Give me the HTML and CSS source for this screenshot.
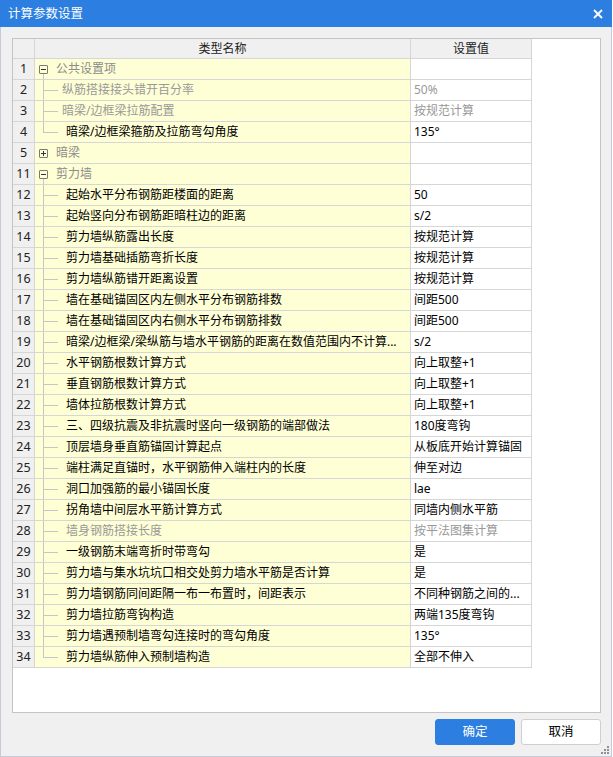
FILE: index.html
```html
<!DOCTYPE html>
<html lang="zh-CN">
<head>
<meta charset="utf-8">
<title>计算参数设置</title>
<link rel="stylesheet" href="styles.css">
</head>
<body>
<div class="dialog">
  <div class="titlebar">
    <span class="title">计算参数设置</span>
    <svg class="close" width="10" height="10" viewBox="0 0 10 10"><path d="M1 1L9 9M9 1L1 9" stroke="#fff" stroke-width="1.8" fill="none"/></svg>
  </div>
  <div class="content">
    <div class="grid">
      <div class="row head">
        <div class="num"></div>
        <div class="name hcell">类型名称</div>
        <div class="val hcell">设置值</div>
      </div>

      <div class="row"><div class="num">1</div><div class="name open"><span class="tog minus"></span><span class="gtxt">公共设置项</span></div><div class="val"></div></div>
      <div class="row"><div class="num">2</div><div class="name"><span class="conn"></span><span class="txt dis near">纵筋搭接接头错开百分率</span></div><div class="val dis">50%</div></div>
      <div class="row"><div class="num">3</div><div class="name"><span class="conn"></span><span class="txt dis near">暗梁/边框梁拉筋配置</span></div><div class="val dis">按规范计算</div></div>
      <div class="row"><div class="num">4</div><div class="name"><span class="conn last"></span><span class="txt">暗梁/边框梁箍筋及拉筋弯勾角度</span></div><div class="val">135°</div></div>
      <div class="row"><div class="num">5</div><div class="name"><span class="tog plus"></span><span class="gtxt">暗梁</span></div><div class="val"></div></div>
      <div class="row"><div class="num">11</div><div class="name open"><span class="tog minus"></span><span class="gtxt">剪力墙</span></div><div class="val"></div></div>
      <div class="row"><div class="num">12</div><div class="name"><span class="conn"></span><span class="txt">起始水平分布钢筋距楼面的距离</span></div><div class="val">50</div></div>
      <div class="row"><div class="num">13</div><div class="name"><span class="conn"></span><span class="txt">起始竖向分布钢筋距暗柱边的距离</span></div><div class="val">s/2</div></div>
      <div class="row"><div class="num">14</div><div class="name"><span class="conn"></span><span class="txt">剪力墙纵筋露出长度</span></div><div class="val">按规范计算</div></div>
      <div class="row"><div class="num">15</div><div class="name"><span class="conn"></span><span class="txt">剪力墙基础插筋弯折长度</span></div><div class="val">按规范计算</div></div>
      <div class="row"><div class="num">16</div><div class="name"><span class="conn"></span><span class="txt">剪力墙纵筋错开距离设置</span></div><div class="val">按规范计算</div></div>
      <div class="row"><div class="num">17</div><div class="name"><span class="conn"></span><span class="txt">墙在基础锚固区内左侧水平分布钢筋排数</span></div><div class="val">间距500</div></div>
      <div class="row"><div class="num">18</div><div class="name"><span class="conn"></span><span class="txt">墙在基础锚固区内右侧水平分布钢筋排数</span></div><div class="val">间距500</div></div>
      <div class="row"><div class="num">19</div><div class="name"><span class="conn"></span><span class="txt">暗梁/边框梁/梁纵筋与墙水平钢筋的距离在数值范围内不计算...</span></div><div class="val">s/2</div></div>
      <div class="row"><div class="num">20</div><div class="name"><span class="conn"></span><span class="txt">水平钢筋根数计算方式</span></div><div class="val">向上取整+1</div></div>
      <div class="row"><div class="num">21</div><div class="name"><span class="conn"></span><span class="txt">垂直钢筋根数计算方式</span></div><div class="val">向上取整+1</div></div>
      <div class="row"><div class="num">22</div><div class="name"><span class="conn"></span><span class="txt">墙体拉筋根数计算方式</span></div><div class="val">向上取整+1</div></div>
      <div class="row"><div class="num">23</div><div class="name"><span class="conn"></span><span class="txt">三、四级抗震及非抗震时竖向一级钢筋的端部做法</span></div><div class="val">180度弯钩</div></div>
      <div class="row"><div class="num">24</div><div class="name"><span class="conn"></span><span class="txt">顶层墙身垂直筋锚固计算起点</span></div><div class="val">从板底开始计算锚固</div></div>
      <div class="row"><div class="num">25</div><div class="name"><span class="conn"></span><span class="txt">端柱满足直锚时，水平钢筋伸入端柱内的长度</span></div><div class="val">伸至对边</div></div>
      <div class="row"><div class="num">26</div><div class="name"><span class="conn"></span><span class="txt">洞口加强筋的最小锚固长度</span></div><div class="val">lae</div></div>
      <div class="row"><div class="num">27</div><div class="name"><span class="conn"></span><span class="txt">拐角墙中间层水平筋计算方式</span></div><div class="val">同墙内侧水平筋</div></div>
      <div class="row"><div class="num">28</div><div class="name"><span class="conn"></span><span class="txt dis">墙身钢筋搭接长度</span></div><div class="val dis">按平法图集计算</div></div>
      <div class="row"><div class="num">29</div><div class="name"><span class="conn"></span><span class="txt">一级钢筋末端弯折时带弯勾</span></div><div class="val">是</div></div>
      <div class="row"><div class="num">30</div><div class="name"><span class="conn"></span><span class="txt">剪力墙与集水坑坑口相交处剪力墙水平筋是否计算</span></div><div class="val">是</div></div>
      <div class="row"><div class="num">31</div><div class="name"><span class="conn"></span><span class="txt">剪力墙钢筋同间距隔一布一布置时，间距表示</span></div><div class="val">不同种钢筋之间的...</div></div>
      <div class="row"><div class="num">32</div><div class="name"><span class="conn"></span><span class="txt">剪力墙拉筋弯钩构造</span></div><div class="val">两端135度弯钩</div></div>
      <div class="row"><div class="num">33</div><div class="name"><span class="conn"></span><span class="txt">剪力墙遇预制墙弯勾连接时的弯勾角度</span></div><div class="val">135°</div></div>
      <div class="row"><div class="num">34</div><div class="name"><span class="conn last"></span><span class="txt">剪力墙纵筋伸入预制墙构造</span></div><div class="val">全部不伸入</div></div>
    </div>
    <div class="buttons">
      <button class="btn primary">确定</button>
      <button class="btn">取消</button>
    </div>
    <svg class="grip" width="8" height="8" viewBox="0 0 8 8">
      <rect x="6" y="0" width="2" height="2" fill="#8a8f99"/>
      <rect x="3" y="3" width="2" height="2" fill="#8a8f99"/>
      <rect x="6" y="3" width="2" height="2" fill="#8a8f99"/>
      <rect x="0" y="6" width="2" height="2" fill="#8a8f99"/>
      <rect x="3" y="6" width="2" height="2" fill="#8a8f99"/>
      <rect x="6" y="6" width="2" height="2" fill="#8a8f99"/>
    </svg>
  </div>
</div>
</body>
</html>
```

FILE: styles.css
```css
* { box-sizing: border-box; }

body {
  margin: 0;
  background: #ffffff;
  font-family: "Noto Sans", "Noto Sans CJK SC", sans-serif;
  font-size: 12px;
  color: #000;
}

.dialog {
  width: 612px;
  height: 757px;
  display: flex;
  flex-direction: column;
}

.titlebar {
  height: 27px;
  flex: none;
  background: #2c7fe0;
  color: #fff;
  display: flex;
  align-items: center;
  justify-content: space-between;
  padding: 0 9px 0 8px;
}

.title {
  font-size: 12.5px;
  line-height: 27px;
}

.close { display: block; }

.content {
  position: relative;
  flex: 1;
  background: #f0f0f0;
  border: 1px solid #c5ccd8;
  border-top: none;
  padding: 11px 10px 0 11px;
}

.grid {
  width: 589px;
  height: 675px;
  background: #fff;
  border: 1px solid #c4c4c4;
  overflow: hidden;
}

.row {
  display: flex;
  width: 519px;
  height: 21px;
  border-bottom: 1px solid #d6d6d6;
  line-height: 20px;
  white-space: nowrap;
}

.row.head {
  height: 20px;
  line-height: 19px;
  background: #f0f0f0;
}

.num {
  width: 22px;
  flex: none;
  border-right: 1px solid #d6d6d6;
  background: #f0f0f0;
  text-align: center;
  color: #222;
  font-size: 12.5px;
}

.name {
  width: 376px;
  flex: none;
  border-right: 1px solid #d6d6d6;
  background: #ffffd6;
  display: flex;
  align-items: center;
  overflow: hidden;
}

.head .name { background: #f0f0f0; }

.val {
  width: 121px;
  flex: none;
  border-right: 1px solid #d6d6d6;
  padding-left: 3px;
  overflow: hidden;
}

.hcell {
  justify-content: center;
  text-align: center;
  color: #222;
  padding-left: 0;
}

.name.open {
  background:
    linear-gradient(#c6c6c6, #c6c6c6) 8px 100% / 1px 50% no-repeat,
    #ffffd6;
}

.tog {
  flex: none;
  width: 9px;
  height: 9px;
  margin-left: 4px;
  border: 1px solid #7a7a7a;
  border-radius: 1px;
  background:
    linear-gradient(#333, #333) center / 5px 1px no-repeat,
    #ffffd6;
}

.tog.plus {
  background:
    linear-gradient(#333, #333) center / 5px 1px no-repeat,
    linear-gradient(#333, #333) center / 1px 5px no-repeat,
    #ffffd6;
}

.gtxt {
  margin-left: 8px;
  color: #8c8c8c;
}

.conn {
  flex: none;
  align-self: stretch;
  width: 15px;
  margin-left: 8px;
  background:
    linear-gradient(#c6c6c6, #c6c6c6) 0 0 / 1px 100% no-repeat,
    linear-gradient(#c6c6c6, #c6c6c6) 0 10px / 100% 1px no-repeat;
}

.conn.last {
  background:
    linear-gradient(#c6c6c6, #c6c6c6) 0 0 / 1px 11px no-repeat,
    linear-gradient(#c6c6c6, #c6c6c6) 0 10px / 100% 1px no-repeat;
}

.txt {
  margin-left: 8px;
  overflow: hidden;
}

.txt.near { margin-left: 4px; }

.dis { color: #999; }

.buttons {
  display: flex;
  justify-content: flex-end;
  gap: 6px;
  width: 589px;
  margin-top: 6px;
}

.btn {
  width: 80px;
  height: 26px;
  border: 1px solid #cfcfcf;
  border-radius: 3px;
  background: #fff;
  color: #000;
  font-family: "Noto Sans", "Noto Sans CJK SC", sans-serif;
  font-size: 12.5px;
  padding: 0;
  line-height: 24px;
}

.btn.primary {
  background: #2c7fe0;
  border-color: #2c7fe0;
  color: #fff;
}

.grip {
  position: absolute;
  right: 2px;
  bottom: 2px;
  display: block;
}
```
